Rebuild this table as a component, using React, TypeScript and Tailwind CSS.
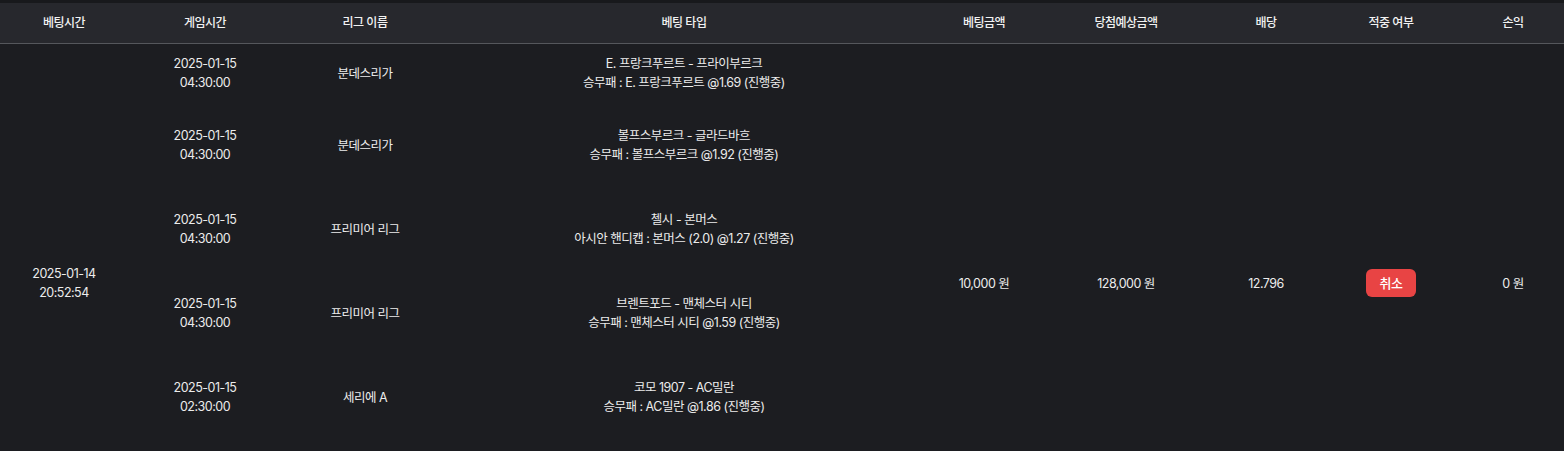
const bets = [
  { time: "04:30:00", league: "분데스리가", match: "E. 프랑크푸르트 - 프라이부르크", pick: "승무패 : E. 프랑크푸르트 @1.69 (진행중)" },
  { time: "04:30:00", league: "분데스리가", match: "볼프스부르크 - 글라드바흐", pick: "승무패 : 볼프스부르크 @1.92 (진행중)" },
  { time: "04:30:00", league: "프리미어 리그", match: "첼시 - 본머스", pick: "아시안 핸디캡 : 본머스 (2.0) @1.27 (진행중)" },
  { time: "04:30:00", league: "프리미어 리그", match: "브렌트포드 - 맨체스터 시티", pick: "승무패 : 맨체스터 시티 @1.59 (진행중)" },
  { time: "02:30:00", league: "세리에 A", match: "코모 1907 - AC밀란", pick: "승무패 : AC밀란 @1.86 (진행중)" },
];

// the grouped cells span one more row that sits below the fold
const span = bets.length + 1;

export default function App() {
  return (
    <div
      className="relative min-h-screen bg-[#1c1d21] pt-[3px] text-[12.5px] leading-[19px] tracking-[-0.04em] text-[#ececec]"
      style={{ fontFamily: "Inter, 'Noto Sans CJK KR', sans-serif" }}
    >
      <div className="absolute left-0 top-0 h-[3px] w-full bg-[#18191c]"></div>
      <table className="w-full table-fixed border-collapse text-center">
        <colgroup>
          <col className="w-[128px]" />
          <col className="w-[154px]" />
          <col className="w-[166px]" />
          <col className="w-[472px]" />
          <col className="w-[128px]" />
          <col className="w-[156px]" />
          <col className="w-[124px]" />
          <col className="w-[134px]" />
          <col className="w-[102px]" />
        </colgroup>
        <thead>
          <tr className="h-[40px] border-b border-[#55575c] bg-[#27282d] text-[12px] text-[#f2f2f2]">
            <th className="font-medium">베팅시간</th>
            <th className="font-medium">게임시간</th>
            <th className="font-medium">리그 이름</th>
            <th className="font-medium">베팅 타입</th>
            <th className="font-medium">베팅금액</th>
            <th className="font-medium">당첨예상금액</th>
            <th className="font-medium">배당</th>
            <th className="pr-2 font-medium">적중 여부</th>
            <th className="font-medium">손익</th>
          </tr>
        </thead>
        <tbody>
          {bets.map((b, idx) => (
            <tr key={idx} className={idx === 0 ? "h-[60px]" : "h-[84px]"}>
              {idx === 0 && (
                <td rowSpan={span}>
                  2025-01-14
                  <br />
                  20:52:54
                </td>
              )}
              <td>
                2025-01-15
                <br />
                {b.time}
              </td>
              <td>{b.league}</td>
              <td>
                {b.match}
                <br />
                {b.pick}
              </td>
              {idx === 0 && (
                <>
                  <td rowSpan={span}>10,000 원</td>
                  <td rowSpan={span}>128,000 원</td>
                  <td rowSpan={span}>12.796</td>
                  <td rowSpan={span} className="pr-2">
                    <span className="inline-flex h-[28px] w-[50px] items-center justify-center rounded-md bg-[#e84444] text-[13px] font-medium text-white">
                      취소
                    </span>
                  </td>
                  <td rowSpan={span}>0 원</td>
                </>
              )}
            </tr>
          ))}
          <tr className="h-[84px]">
            <td></td>
            <td></td>
            <td></td>
          </tr>
        </tbody>
      </table>
    </div>
  );
}
